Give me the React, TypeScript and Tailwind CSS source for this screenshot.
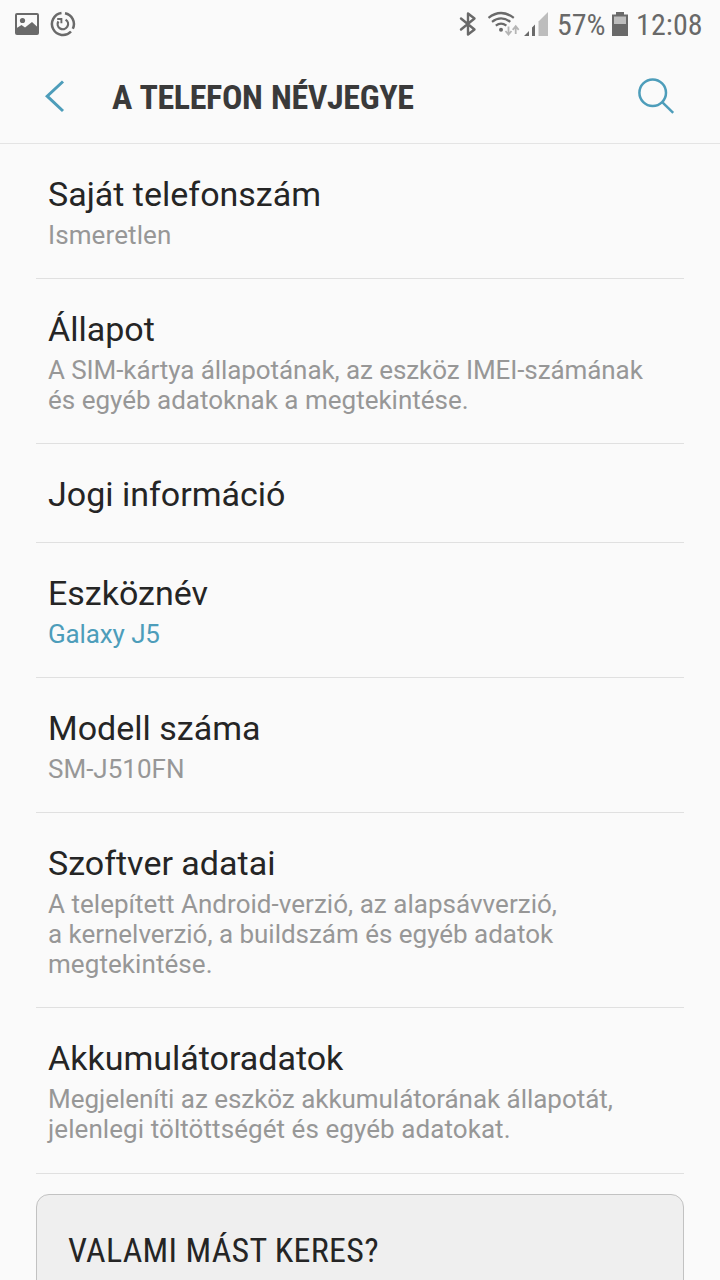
import React from "react";

type Line = { text: string; tracking?: string };
type Item = { title: string; lines?: Line[]; accent?: boolean; height: string };

const items: Item[] = [
  { title: "Saját telefonszám", lines: [{ text: "Ismeretlen", tracking: "tracking-[0.1px]" }], height: "h-[135px]" },
  {
    title: "Állapot",
    lines: [
      { text: "A SIM-kártya állapotának, az eszköz IMEI-számának", tracking: "tracking-[-0.08px]" },
      { text: "és egyéb adatoknak a megtekintése." },
    ],
    height: "h-[165px]",
  },
  { title: "Jogi információ", height: "h-[99px]" },
  { title: "Eszköznév", lines: [{ text: "Galaxy J5", tracking: "tracking-[-0.12px]" }], accent: true, height: "h-[135px]" },
  { title: "Modell száma", lines: [{ text: "SM-J510FN" }], height: "h-[135px]" },
  {
    title: "Szoftver adatai",
    lines: [
      { text: "A telepített Android-verzió, az alapsávverzió,", tracking: "tracking-[0.03px]" },
      { text: "a kernelverzió, a buildszám és egyéb adatok", tracking: "tracking-[-0.02px]" },
      { text: "megtekintése.", tracking: "tracking-[0.07px]" },
    ],
    height: "h-[195px]",
  },
  {
    title: "Akkumulátoradatok",
    lines: [
      { text: "Megjeleníti az eszköz akkumulátorának állapotát,", tracking: "tracking-[-0.04px]" },
      { text: "jelenlegi töltöttségét és egyéb adatokat.", tracking: "tracking-[0.07px]" },
    ],
    height: "h-[166px]",
  },
];

function PictureIcon() {
  return (
    <svg className="h-12 w-6 shrink-0" viewBox="15 0 24 48" fill="none">
      <rect x="16" y="14" width="22" height="20" rx="1" stroke="#6a6a6a" strokeWidth="2" />
      <circle cx="22.5" cy="20.5" r="2.6" fill="#6a6a6a" />
      <path d="M16 28.5 L21.5 25 L25 27.5 L32 22 L38 27.5 V34 H16Z" fill="#6a6a6a" />
    </svg>
  );
}

function SyncIcon() {
  return (
    <svg className="h-12 w-[26px] shrink-0" viewBox="50 0 26 48" fill="none" stroke="#6a6a6a">
      <path d="M61.5 13.1 A11 11 0 1 0 71 31.5" strokeWidth="2.5" />
      <path d="M65 13.2 A11 11 0 0 1 72.8 28.8" strokeWidth="2.5" />
      <path d="M65.6 19.6 A5.2 5.2 0 1 1 58.4 21.3" strokeWidth="2.3" />
      <path d="M57.2 19 H61.4 V23.2" strokeWidth="1.9" />
    </svg>
  );
}

function StatusIcons() {
  return (
    <svg className="h-12 w-[92px] shrink-0" viewBox="458 0 92 48" fill="none">
      <path d="M461 18.5 L474.5 29.5 L468 34.5 V13.5 L474.5 18.5 L461 29.5" stroke="#696969" strokeWidth="2.4" strokeLinejoin="round" strokeLinecap="round" />
      <g stroke="#6a6a6a" strokeWidth="2.2">
        <path d="M488.5 17.8 Q501 8.2 513.8 17.8" />
        <path d="M492 21.8 Q501 14.8 510.3 21.8" />
        <path d="M495.8 25.6 Q501 21.7 506.4 25.6" />
      </g>
      <circle cx="501" cy="29.7" r="2" fill="#6a6a6a" />
      <g stroke="#b5b5b5" strokeWidth="1.8">
        <path d="M508.5 26.5 V34.5 M505.5 31 L508.5 34.5 L511.5 31" />
        <path d="M515.7 34 V26.5 M512.7 29.8 L515.7 26.2 L518.7 29.8" />
      </g>
      <path d="M524 36 L529 31 V36Z M532 27.5 L535 24.5 V36 H532Z" fill="#6a6a6a" />
      <path d="M538.5 21.5 L548 12 V36 H538.5Z" fill="#bdbdbd" />
    </svg>
  );
}

function BatteryIcon() {
  return (
    <svg className="h-12 w-4 shrink-0" viewBox="612 0 16 48">
      <path d="M616 12 H624 V14.5 H628 V36 H612 V14.5 H616Z" fill="#696969" />
      <rect x="614" y="16.5" width="12" height="7.5" fill="#bdbdbd" />
    </svg>
  );
}

export default function App() {
  return (
    <div className="h-[1280px] w-[720px] overflow-hidden bg-[#fafafa] font-[Roboto,sans-serif] text-[#252525]">
      <div className="flex h-12 items-center pl-[15px] font-['Roboto_Condensed',Roboto,sans-serif] text-[30px] leading-[48px] text-[#696969]">
        <PictureIcon />
        <div className="ml-[11px] flex">
          <SyncIcon />
        </div>
        <div className="ml-[382px] flex">
          <StatusIcons />
        </div>
        <span className="ml-[7px] w-[55px] pt-0.5 whitespace-nowrap [font-stretch:75%]">57%</span>
        <BatteryIcon />
        <span className="ml-2 pt-0.5 tracking-[0.1px] whitespace-nowrap [font-stretch:75%]">12:08</span>
      </div>
      <header className="flex h-24 items-center border-b border-[#e4e4e4]">
        <svg className="ml-11 h-9 w-[22px]" viewBox="44 78 22 36" fill="none">
          <path d="M63 81.5 L47.2 96.2 L63 111" stroke="#4d9dba" strokeWidth="3" />
        </svg>
        <h1 className="ml-[46px] w-[524px] pt-[3px] font-['Roboto_Condensed',Roboto,sans-serif] text-[34px] leading-10 font-bold tracking-[-0.36px] [word-spacing:1px] whitespace-nowrap text-[#3a3a3a] [font-stretch:75%]">
          A TELEFON NÉVJEGYE
        </h1>
        <svg className="h-10 w-10" viewBox="636 76 40 40" fill="none" stroke="#4d9dba" strokeWidth="2.5">
          <circle cx="652.7" cy="92.7" r="13.3" />
          <path d="M662.2 102.2 L673.2 112.8" />
        </svg>
      </header>
      <main className="px-9">
        {items.map((item) => (
          <section key={item.title} className={`${item.height} border-b border-[#e0e0e0] px-3 pt-[30px]`}>
            <h2 className="mb-1.5 text-[34px] leading-10 whitespace-nowrap">{item.title}</h2>
            {item.lines?.map((line) => (
              <p
                key={line.text}
                className={`text-[26px] leading-[30px] whitespace-nowrap ${line.tracking ?? ""} ${item.accent ? "text-[#4d9dba]" : "text-[#979797]"}`}
              >
                {line.text}
              </p>
            ))}
          </section>
        ))}
        <section className="mt-5 h-[200px] rounded-[13px] border border-[#c2c2c2] bg-[#efefef] px-[31px] pt-[35px]">
          <h2 className="font-['Roboto_Condensed',Roboto,sans-serif] text-[34px] leading-10 tracking-[0.27px] whitespace-nowrap [font-stretch:75%]">
            VALAMI MÁST KERES?
          </h2>
        </section>
      </main>
    </div>
  );
}
